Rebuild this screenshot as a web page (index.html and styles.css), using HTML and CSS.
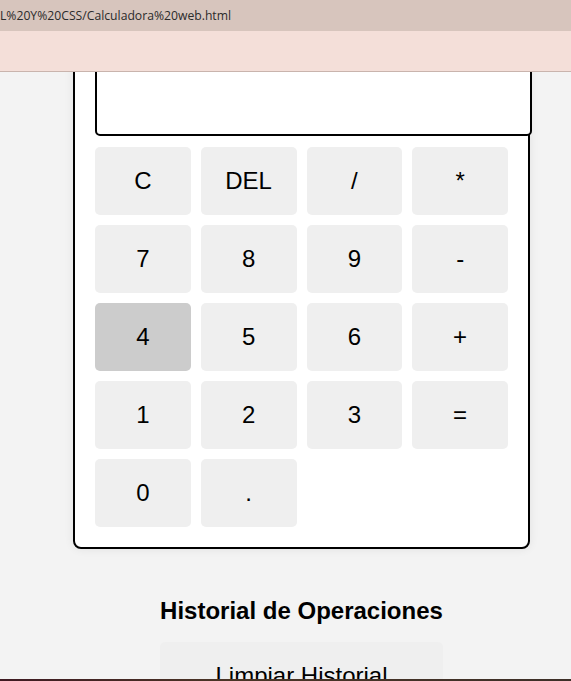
FILE: index.html
```html
<!DOCTYPE html>
<html lang="es">
<head>
<meta charset="utf-8">
<title>Calculadora web</title>
<link rel="stylesheet" href="styles.css">
</head>
<body>
<div class="addr"><span class="url">L%20Y%20CSS/Calculadora%20web.html</span></div>
<div class="toolbar"></div>
<div class="viewport">
  <div class="page">
    <div class="calc">
      <div class="display"></div>
      <div class="keys">
        <button class="key">C</button>
        <button class="key">DEL</button>
        <button class="key">/</button>
        <button class="key">*</button>
        <button class="key">7</button>
        <button class="key">8</button>
        <button class="key">9</button>
        <button class="key">-</button>
        <button class="key hover">4</button>
        <button class="key">5</button>
        <button class="key">6</button>
        <button class="key">+</button>
        <button class="key">1</button>
        <button class="key">2</button>
        <button class="key">3</button>
        <button class="key">=</button>
        <button class="key">0</button>
        <button class="key">.</button>
      </div>
    </div>
    <div class="history">
      <div class="history-inner">
        <h2 class="history-title">Historial de Operaciones</h2>
        <button class="clear">Limpiar Historial</button>
      </div>
    </div>
  </div>
</div>
<div class="taskbar"></div>
</body>
</html>
```
FILE: styles.css
```css
html, body {
  margin: 0;
  padding: 0;
  height: 100%;
  overflow: hidden;
}
body {
  display: flex;
  flex-direction: column;
  background: #f3f3f3;
  font-family: "Liberation Sans", Arial, sans-serif;
}
.addr {
  height: 31px;
  flex: none;
  background: #d7c5bd;
  display: flex;
  align-items: center;
}
.url {
  font-family: "Open Sans", "Noto Sans", sans-serif;
  font-size: 12.2px;
  color: #2b2b2b;
  margin-top: -1px;
  white-space: nowrap;
}
.toolbar {
  height: 40px;
  flex: none;
  background: #f4dfd9;
  border-bottom: 1px solid #c9b4ad;
}
.viewport {
  flex: 1;
  overflow: hidden;
  background: #f3f3f3;
}
.page {
  width: 457px;
  margin-left: 73px;
  margin-top: -42px;
}
.calc {
  background: #fff;
  border: 2px solid #000;
  border-radius: 8px;
  padding: 20px;
  box-shadow: 0 0 10px rgba(0, 0, 0, 0.08);
}
.display {
  height: 60px;
  padding: 10px;
  border: 2px solid #000;
  border-radius: 5px;
  background: #fff;
  width: 100%;
  margin-bottom: 11px;
}
.keys {
  display: grid;
  grid-template-columns: repeat(4, 1fr);
  gap: 10px;
}
.key {
  height: 68px;
  border: none;
  border-radius: 5px;
  background: #efefef;
  font-family: "Liberation Sans", Arial, sans-serif;
  font-size: 24px;
  color: #000;
  padding: 0;
}
.key.hover {
  background: #cccccc;
}
.history {
  display: flex;
  justify-content: center;
  margin-top: 48px;
}
.history-inner {
  display: flex;
  flex-direction: column;
  align-items: stretch;
}
.history-title {
  margin: 0 0 17px;
  font-size: 24px;
  font-weight: bold;
  color: #000;
  text-align: center;
}
.clear {
  border: none;
  border-radius: 5px;
  background: #efefef;
  font-family: "Liberation Sans", Arial, sans-serif;
  font-size: 24px;
  color: #000;
  padding: 20px;
}
.taskbar {
  height: 2px;
  flex: none;
  background: linear-gradient(90deg, #3f1a22, #4a3526 40%, #3d2f28);
}
```
